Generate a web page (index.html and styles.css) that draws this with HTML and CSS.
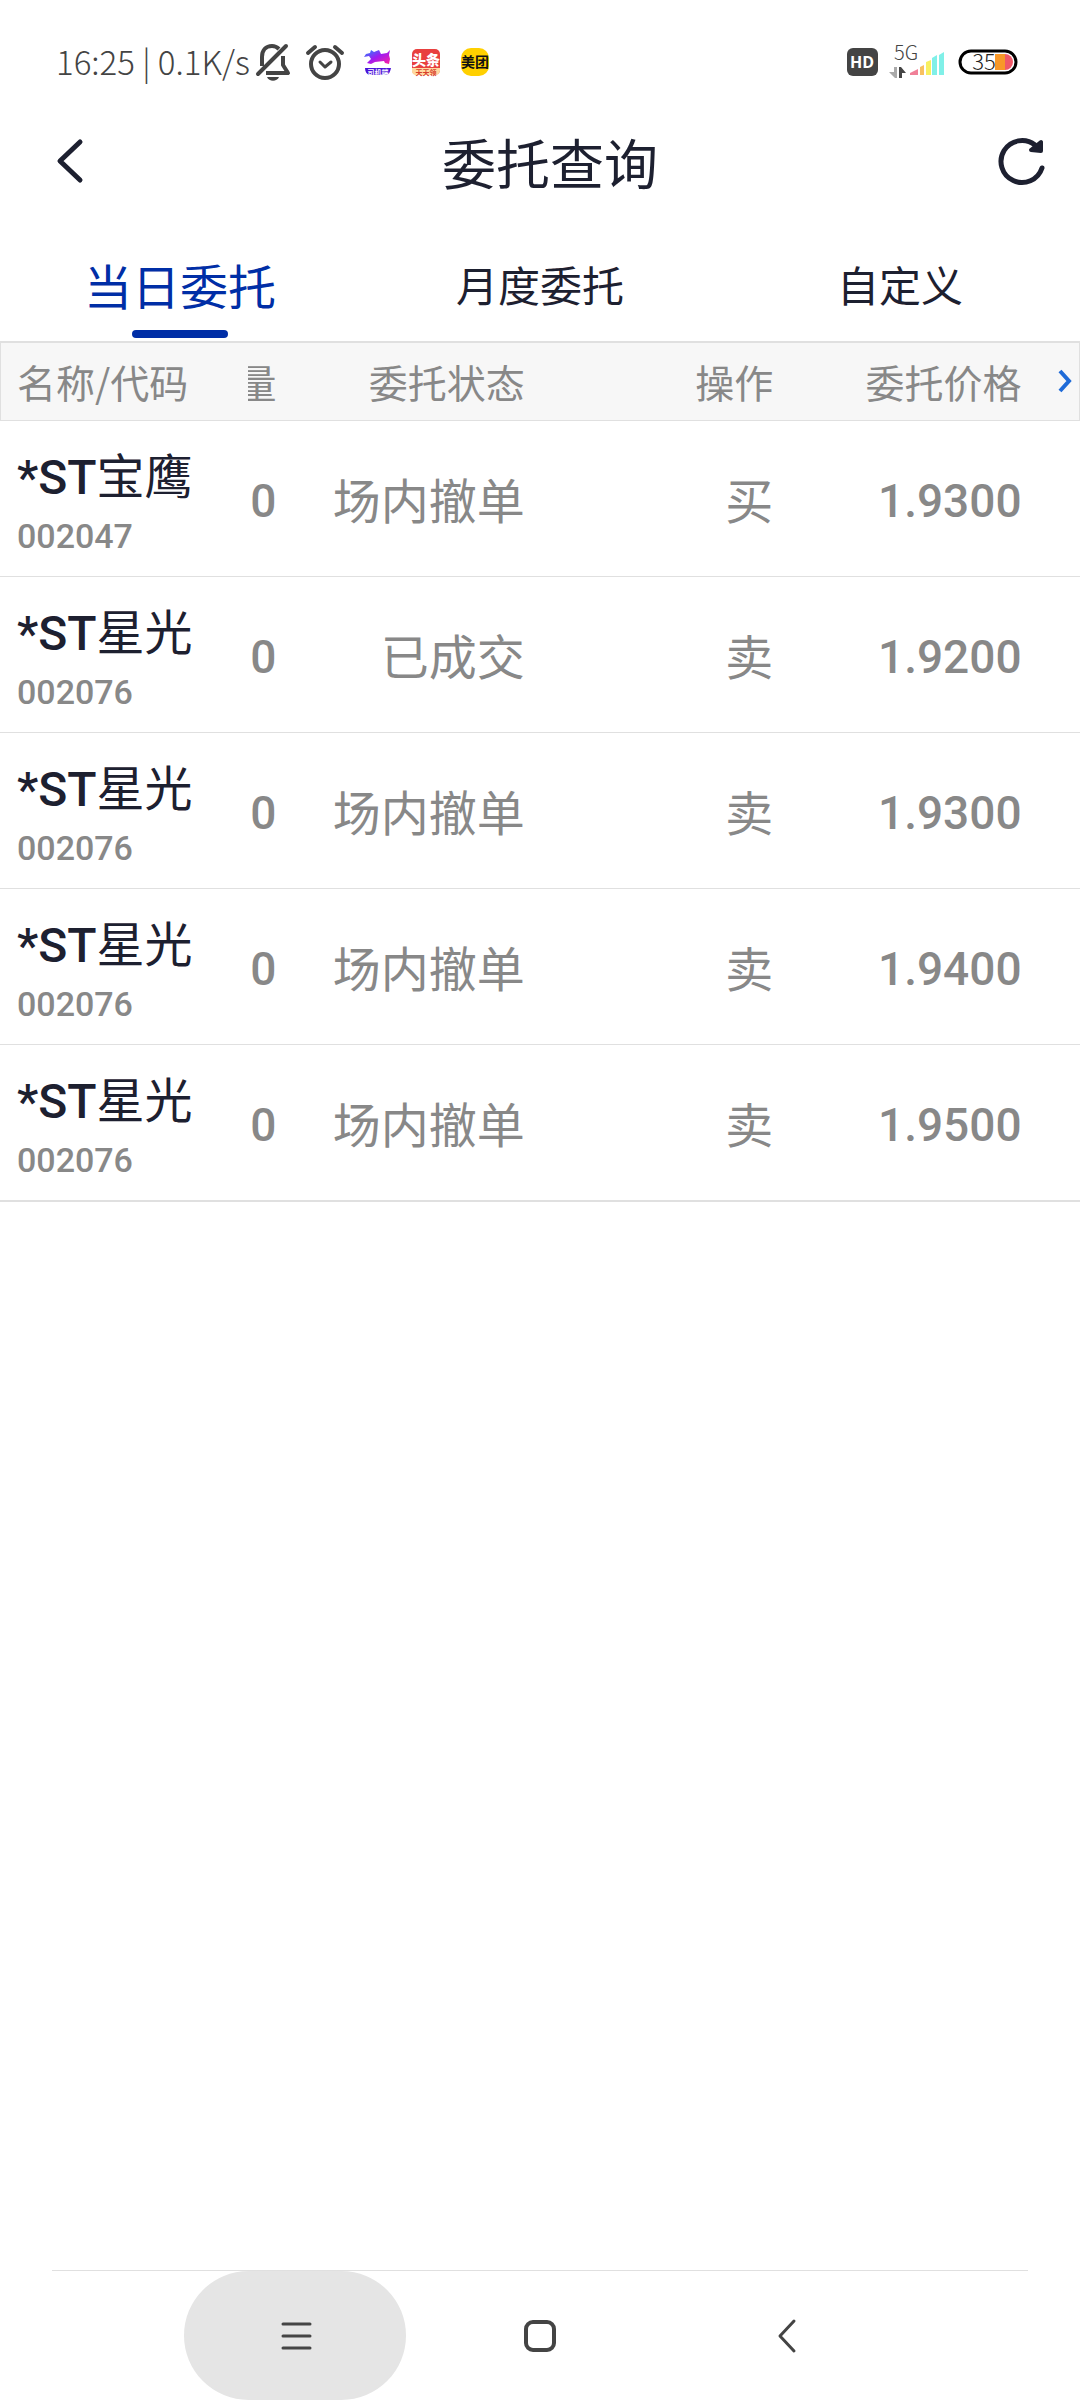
FILE: index.html
```html
<!DOCTYPE html>
<html lang="zh-CN">
<head>
    <meta charset="UTF-8">
    <meta name="viewport" content="width=device-width">
    <title>委托查询</title>
    <link rel="stylesheet" href="styles.css">
</head>
<body>
<div class="status-bar">
    <div class="status-left">
        <span class="status-text">16:25 | 0.1K/s</span>
        <svg class="icon-bell" width="36" height="40" viewBox="0 0 36 40" fill="none" stroke="#444" stroke-width="4">
            <path d="M7 24V15C7 8 11 4 17 4c3 0 5 1 7 3M28 14v9l5 8H11" stroke-linejoin="round"/>
            <path d="M3 32L31 4" stroke-linecap="round"/>
            <path d="M12 35h12c-2 5-10 5-12 0z" fill="#444" stroke="none"/>
        </svg>
        <svg class="icon-clock" width="40" height="40" viewBox="0 0 40 40" fill="none" stroke="#444" stroke-width="4" stroke-linecap="round" stroke-linejoin="round">
            <circle cx="20" cy="22" r="14"/>
            <path d="M15 20l5 5 6-5" stroke-width="3"/>
            <path d="M3 11l7-6M37 11l-7-6"/>
        </svg>
        <svg class="icon-app" width="28" height="28" viewBox="0 0 28 28">
            <defs>
                <linearGradient id="horse" x1="0" y1="0" x2="1" y2="1">
                    <stop offset="0" stop-color="#1f8bff"/>
                    <stop offset=".5" stop-color="#a01af0"/>
                    <stop offset="1" stop-color="#ff1fa0"/>
                </linearGradient>
            </defs>
            <path d="M2 6l4-1 1-3 3 2 5-2 2 4 6-1 3-3-1 5 1 4-1 5-4-1-1-2-9 1-4 2-4-1 4-4-2-3-5 1z" fill="url(#horse)"/>
            <path d="M1 20h26c-1 4-2 6-4 7H5c-2-1-4-3-4-7z" fill="#4a12d8"/>
            <text x="14" y="27" text-anchor="middle" font-size="7" font-weight="700" fill="#fff">司机端</text>
        </svg>
        <svg class="icon-app" width="30" height="28" viewBox="0 0 30 28">
            <rect x="1" y="1" width="28" height="26" rx="5" fill="#e8403f"/>
            <path d="M1 20h28v3c-1 3-2 4-5 4H6c-3 0-5-1-5-4z" fill="#ffd9a0"/>
            <text x="15" y="17" text-anchor="middle" font-size="14" font-weight="900" fill="#fff">头条</text>
            <text x="15" y="27" text-anchor="middle" font-size="7" font-weight="700" fill="#d8402c">天天领</text>
        </svg>
        <svg class="icon-app" width="30" height="30" viewBox="0 0 30 30">
            <rect x="1" y="1" width="28" height="28" rx="10" fill="#ffd000"/>
            <text x="15" y="20" text-anchor="middle" font-size="14" font-weight="700" fill="#111">美团</text>
        </svg>
    </div>
    <div class="status-right">
        <svg width="31" height="30" viewBox="0 0 31 30">
            <rect x="0" y="1" width="31" height="28" rx="6" fill="#444"/>
            <text class="latin" x="15" y="21" text-anchor="middle" font-size="16" font-weight="700" fill="#fff">HD</text>
        </svg>
        <svg width="56" height="40" viewBox="0 0 56 40">
            <text class="light" x="4" y="18" font-size="20" fill="#444">5G</text>
            <path d="M4 25h3v11H5l-6-6h5z" fill="#aaa"/>
            <path d="M9 36h3v-5h4l-5-6H9z" fill="#444"/>
            <path d="M20 33v-2l8-4v6z" fill="#f08098"/>
            <path d="M30 25l4-2v10h-4z" fill="#f8c060"/>
            <path d="M36 20l5-2v15h-5z" fill="#f8f060"/>
            <path d="M42 16l5-3v20h-5z" fill="#80f0e8"/>
            <path d="M49 13l5-3v23h-5z" fill="#80f0e8"/>
        </svg>
        <svg width="60" height="26" viewBox="0 0 60 26">
            <rect x="2" y="2" width="56" height="22" rx="11" fill="#fff" stroke="#000" stroke-width="3"/>
            <path d="M37 5h10v16H37z" fill="#f89828"/>
            <path d="M47 5a8 8 0 0 1 0 16z" fill="#f05868"/>
            <text class="light" x="26" y="21" text-anchor="middle" font-size="22" fill="#222">35</text>
        </svg>
    </div>
</div>

<header class="title-bar">
    <button class="title-btn" type="button" aria-label="返回">
        <svg width="32" height="48" viewBox="0 0 32 48" fill="none" stroke="#1d2030" stroke-width="5" stroke-linecap="round" stroke-linejoin="round">
            <path d="M26 4L6 23l20 19"/>
        </svg>
    </button>
    <h1 class="title">委托查询</h1>
    <button class="title-btn" type="button" aria-label="刷新">
        <svg width="48" height="48" viewBox="0 0 48 48" fill="none" stroke="#1d2030" stroke-width="5" stroke-linecap="round" stroke-linejoin="round">
            <path d="M44 30A21 21 0 1 1 37 7"/>
            <path d="M43 4v9l-10-1z" fill="#1d2030" stroke-width="4"/>
        </svg>
    </button>
</header>

<nav class="tabs">
    <a class="tab active" href="#day">当日委托</a>
    <a class="tab" href="#month">月度委托</a>
    <a class="tab" href="#custom">自定义</a>
</nav>

<table class="orders">
    <colgroup>
        <col class="col-main">
        <col class="col-qty">
        <col class="col-main">
        <col class="col-main">
        <col class="col-main">
        <col>
    </colgroup>
    <thead>
    <tr>
        <th class="name">名称/代码</th>
        <th><div class="clip">量</div></th>
        <th>委托状态</th>
        <th>操作</th>
        <th>委托价格</th>
        <th class="more">
            <svg width="16" height="24" viewBox="0 0 16 24" fill="none" stroke="#1f6bd8" stroke-width="4">
                <path d="M2 2l9 10-9 10"/>
            </svg>
        </th>
    </tr>
    </thead>
    <tbody>
    <tr>
        <td class="name"><span class="mark">*ST</span>宝鹰<span class="code">002047</span></td>
        <td class="num">0</td>
        <td>场内撤单</td>
        <td>买</td>
        <td class="num">1.9300</td>
        <td></td>
    </tr>
    <tr>
        <td class="name"><span class="mark">*ST</span>星光<span class="code">002076</span></td>
        <td class="num">0</td>
        <td>已成交</td>
        <td>卖</td>
        <td class="num">1.9200</td>
        <td></td>
    </tr>
    <tr>
        <td class="name"><span class="mark">*ST</span>星光<span class="code">002076</span></td>
        <td class="num">0</td>
        <td>场内撤单</td>
        <td>卖</td>
        <td class="num">1.9300</td>
        <td></td>
    </tr>
    <tr>
        <td class="name"><span class="mark">*ST</span>星光<span class="code">002076</span></td>
        <td class="num">0</td>
        <td>场内撤单</td>
        <td>卖</td>
        <td class="num">1.9400</td>
        <td></td>
    </tr>
    <tr>
        <td class="name"><span class="mark">*ST</span>星光<span class="code">002076</span></td>
        <td class="num">0</td>
        <td>场内撤单</td>
        <td>卖</td>
        <td class="num">1.9500</td>
        <td></td>
    </tr>
    </tbody>
</table>

<footer class="nav-bar">
    <button class="nav-btn pressed" type="button" aria-label="菜单">
        <svg width="32" height="34" viewBox="0 0 32 34" stroke="#444" stroke-width="3" stroke-linecap="round">
            <path d="M4 5h27M4 17h27M4 29h27"/>
        </svg>
    </button>
    <button class="nav-btn" type="button" aria-label="主页">
        <svg width="34" height="34" viewBox="0 0 34 34" fill="none" stroke="#444" stroke-width="4">
            <rect x="3" y="3" width="28" height="28" rx="7"/>
        </svg>
    </button>
    <button class="nav-btn" type="button" aria-label="后退">
        <svg width="22" height="34" viewBox="0 0 22 34" fill="none" stroke="#444" stroke-width="3" stroke-linecap="round" stroke-linejoin="round">
            <path d="M20 2L6 17l14 15"/>
        </svg>
    </button>
</footer>
</body>
</html>
```

FILE: styles.css
```css
*{
    box-sizing:border-box;
}

body{
    margin:0;
    min-height:100vh;
    display:flex;
    flex-direction:column;
    background:#fff;
    color:#1d2030;
    font-family:"Noto Sans CJK SC",sans-serif;
}

button{
    border:0;
    padding:0;
    background:none;
    display:flex;
    align-items:center;
    justify-content:center;
}

svg{
    display:block;
    flex:none;
    overflow:visible;
}

.latin{
    font-family:"Open Sans",sans-serif;
}

.light{
    font-family:"Noto Sans CJK SC",sans-serif;
    font-weight:300;
}

/* 系统状态栏 */
.status-bar{
    height:124px;
    padding:0 62px 0 56px;
    display:flex;
    align-items:center;
    justify-content:space-between;
}

.status-left,
.status-right{
    display:flex;
    align-items:center;
}

.status-text{
    font-size:33px;
    line-height:44px;
    padding-bottom:2px;
    font-weight:300;
    color:#444;
    white-space:nowrap;
}

.status-right{
    gap:12px;
}

.icon-bell{
    margin-left:5px;
}

.icon-clock{
    margin-left:14px;
}

.icon-app{
    margin-left:19px;
}

/* 标题 */
.title-bar{
    height:76px;
    padding:0 34px 0 54px;
    display:flex;
    align-items:center;
    justify-content:space-between;
}

.title-btn{
    width:48px;
    height:76px;
    justify-content:flex-start;
}

.title{
    margin:0;
    font-size:54px;
    line-height:76px;
    font-weight:400;
}

/* 选项卡 */
.tabs{
    display:flex;
    padding:54px 0 3px;
}

.tab{
    flex:1;
    display:flex;
    flex-direction:column;
    align-items:center;
    gap:16px;
    font-size:42px;
    line-height:60px;
    color:#1d2030;
    text-decoration:none;
}

.tab::after{
    content:"";
    width:96px;
    height:8px;
    border-radius:4px;
}

.tab.active{
    font-size:48px;
    color:#002ea6;
}

.tab.active::after{
    background:#002ea6;
}

/* 委托列表 */
.orders{
    width:100%;
    table-layout:fixed;
    border-collapse:separate;
    border-spacing:0;
    border-bottom:1px solid #e0e0e0;
}

.col-main{
    width:23%;
}

.col-qty{
    width:28px;
}

.orders th,
.orders td{
    padding:0;
    color:#888;
    font-weight:400;
    text-align:right;
    white-space:nowrap;
    border-bottom:1px solid #e0e0e0;
}

.orders th{
    height:80px;
    padding-bottom:2px;
    font-size:39px;
    line-height:56px;
    background:#f7f7f7;
    border-top:2px solid #e0e0e0;
}

.orders th:first-child{
    border-left:1px solid #e0e0e0;
}

.orders th:last-child{
    border-right:1px solid #e0e0e0;
}

.orders td{
    height:156px;
    padding-bottom:2px;
    font-size:48px;
    line-height:60px;
}

.orders .name{
    padding-left:16px;
    text-align:left;
}

.orders td.name{
    padding-top:12px;
    padding-left:17px;
    color:#1d2030;
}

.mark{
    font-family:Roboto,sans-serif;
    font-weight:500;
}

.orders .num{
    padding-top:7px;
    font-family:Roboto,sans-serif;
    font-size:46px;
    font-weight:500;
}

.orders .code{
    display:block;
    font-family:Roboto,sans-serif;
    font-size:34px;
    line-height:56px;
    font-weight:500;
    color:#888;
}

.orders .more svg{
    margin-left:auto;
    margin-right:5px;
}

.clip{
    display:flex;
    justify-content:flex-end;
    overflow:hidden;
}

/* 底部导航 */
.nav-bar{
    margin:auto 52px 0;
    height:130px;
    display:flex;
    justify-content:center;
    gap:23px;
    border-top:1px solid #e0e0e0;
}

.nav-btn{
    width:222px;
    height:129px;
}

.nav-btn.pressed{
    background:#e5e5e5;
    border-radius:65px;
}
```
